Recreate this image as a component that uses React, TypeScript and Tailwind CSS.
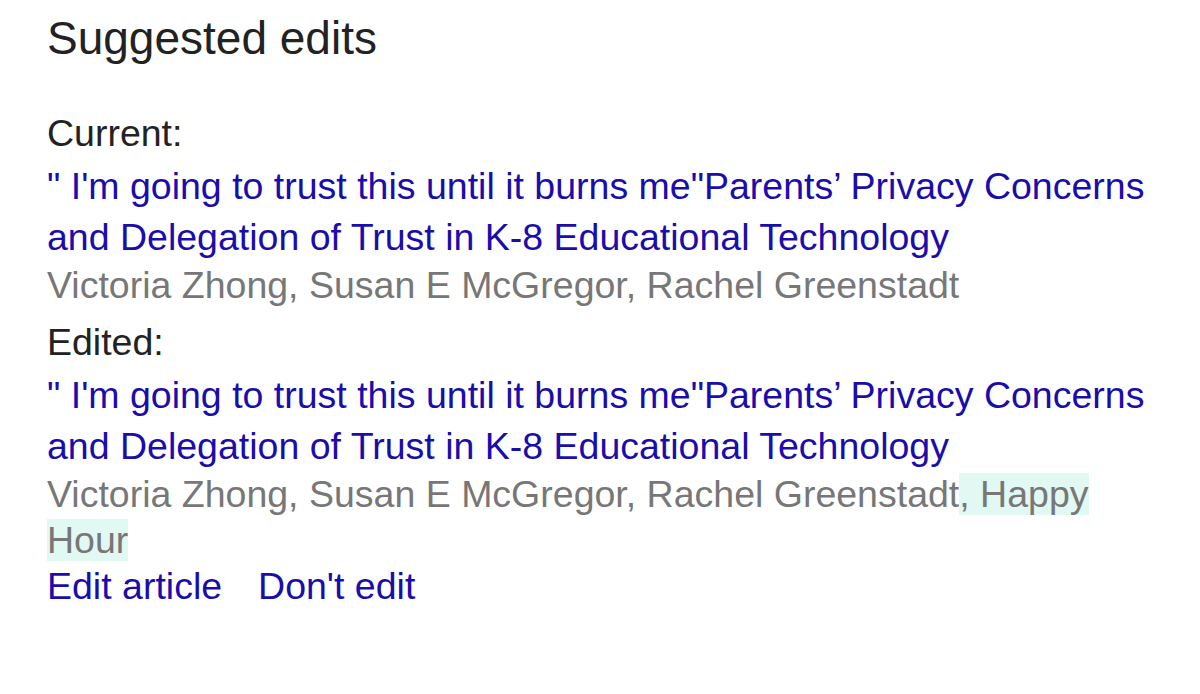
import React from 'react';

type Edit = {
  label: string;
  title: string;
  authors: string;
  added?: string;
};

const edits: Edit[] = [
  {
    label: 'Current:',
    title: '" I\'m going to trust this until it burns me"Parents\u2019 Privacy Concerns and Delegation of Trust in K-8 Educational Technology',
    authors: 'Victoria Zhong, Susan E McGregor, Rachel Greenstadt',
  },
  {
    label: 'Edited:',
    title: '" I\'m going to trust this until it burns me"Parents\u2019 Privacy Concerns and Delegation of Trust in K-8 Educational Technology',
    authors: 'Victoria Zhong, Susan E McGregor, Rachel Greenstadt',
    added: ', Happy Hour',
  },
];

const EditBlock: React.FC<{ edit: Edit }> = ({ edit }) => (
  <div>
    <div className="text-[#222222] leading-[46px]">{edit.label}</div>
    <a href="#" className="block mt-[5px] text-[#1a0dab] leading-[51px]">
      {edit.title}
    </a>
    <div className="-mt-px text-[#777777] leading-[46px]">
      {edit.authors}
      {edit.added && <span className="bg-[#e2f8f3]">{edit.added}</span>}
    </div>
  </div>
);

const App: React.FC = () => {
  return (
    <div
      className="min-h-[694px] bg-white pl-[47px] pr-[36px] pt-[10px] text-[37.5px]"
      style={{ fontFamily: '"Liberation Sans", Arial, sans-serif' }}
    >
      <h1 className="text-[46px] leading-[56px] text-[#222222]">Suggested edits</h1>

      <div className="mt-[44px] space-y-[11px]">
        {edits.map((edit) => (
          <EditBlock key={edit.label} edit={edit} />
        ))}
      </div>

      <div className="flex gap-[36px] leading-[46px] text-[#1a0dab]">
        <a href="#">Edit article</a>
        <a href="#">Don't edit</a>
      </div>
    </div>
  );
};

export default App;
